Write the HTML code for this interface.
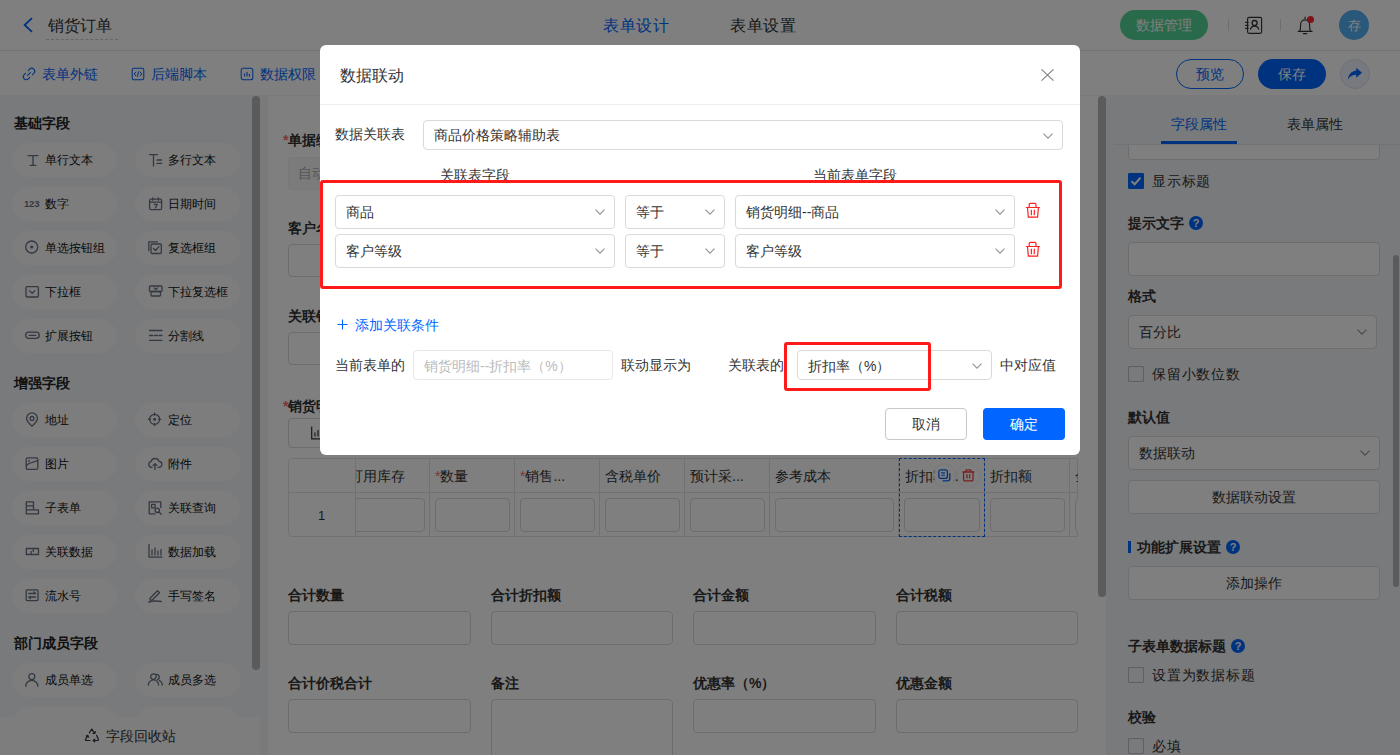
<!DOCTYPE html>
<html><head><meta charset="utf-8">
<style>
*{box-sizing:border-box;margin:0;padding:0}
html,body{width:1400px;height:755px;overflow:hidden;background:#fff}
body{position:relative;font-family:"Liberation Sans",sans-serif;font-size:14px;color:#333}
.a{position:absolute}
.t{position:absolute;white-space:nowrap;line-height:1}
svg{position:absolute;overflow:visible}
#hdr{left:0;top:0;width:1400px;height:51px;border-bottom:1px solid #e6e6e6;background:#fff}
#tb{left:0;top:51px;width:1400px;height:45px;background:#fff;border-bottom:1px solid #f4f4f4}
#lp{left:0;top:96px;width:268px;height:659px;background:#f3f4f6}
.pill{position:absolute;width:105px;height:34px;border-radius:17px;background:#fafbfc}
.pill span{position:absolute;left:33px;top:10px;font-size:12px;line-height:14px;color:#111;white-space:nowrap}
.pill svg{left:14px;top:11px}
.sec{position:absolute;left:14px;font-size:14px;font-weight:bold;color:#222;line-height:14px;white-space:nowrap}
#rp{left:1106px;top:96px;width:294px;height:659px;background:#f3f5f9}
.inp{position:absolute;border:1px solid #dadada;border-radius:4px;background:#fff}
.lbl{position:absolute;font-size:14px;font-weight:bold;color:#333;white-space:nowrap;line-height:14px}
.sb{position:absolute;width:8px;border-radius:4px;background:#b6b6b6}
#mask{left:0;top:0;width:1400px;height:755px;background:rgba(0,0,0,.5)}
#modal{left:320px;top:45px;width:760px;height:410px;background:#fff;border-radius:6px}
.sel{position:absolute;border:1px solid #dadada;border-radius:4px;background:#fff}
.sel span{position:absolute;left:10px;font-size:14px;line-height:14px;color:#333;white-space:nowrap}
.chev{position:absolute;width:7px;height:7px;border-right:1.3px solid #888;border-bottom:1.3px solid #888;transform:rotate(45deg)}
.th{position:absolute;top:459px;height:34px;border-right:1px solid #ebeef5}
.td{position:absolute;top:493px;height:43px;border-right:1px solid #ebeef5;border-top:1px solid #ebeef5}
.tht{position:absolute;top:469px;font-size:14px;line-height:14px;color:#333;white-space:nowrap}
.star{color:#f56c6c}
.cb{position:absolute;width:16px;height:16px;border:1px solid #b9bec8;border-radius:1px;background:transparent}
.q{position:absolute;width:14px;height:14px;border-radius:50%;background:#0066ff;color:#fff;font-size:11px;line-height:14px;text-align:center;font-weight:bold}
.btn{position:absolute;border:1px solid #dcdfe6;border-radius:4px;background:#fff;text-align:center;font-size:14px;color:#333}
</style></head>
<body>
<!-- ============ HEADER ============ -->
<div id="hdr" class="a">
  <svg style="left:22px;top:17px" width="12" height="16" viewBox="0 0 12 16"><path d="M10 1.2 L2.6 8 L10 14.8" fill="none" stroke="#0066ff" stroke-width="1.8"/></svg>
  <div class="t" style="left:48px;top:18px;font-size:16px;color:#333">销货订单</div>
  <div class="a" style="left:46px;top:39px;width:72px;border-top:1px dashed #ccc"></div>
  <div class="t" style="left:603px;top:18px;font-size:16px;letter-spacing:.7px;color:#0066ff">表单设计</div>
  <div class="t" style="left:730px;top:18px;font-size:16px;letter-spacing:.7px;color:#333">表单设置</div>
  <div class="a" style="left:1120px;top:10px;width:88px;height:30px;border-radius:15px;background:#52d494"></div>
  <div class="t" style="left:1136px;top:18px;font-size:14px;color:#fff">数据管理</div>
  <div class="a" style="left:1228px;top:19px;width:1px;height:12px;background:#ddd"></div>
  <div class="a" style="left:1280px;top:19px;width:1px;height:12px;background:#ddd"></div>
  <svg style="left:1244px;top:16px" width="20" height="19" viewBox="0 0 20 19"><rect x="3.6" y="1.3" width="14" height="16" rx="1.5" fill="none" stroke="#333" stroke-width="1.15"/><path d="M1.2 6.3H4.6M1.2 9.3H4.6M1.2 12.3H4.6" stroke="#333" stroke-width="1.2"/><circle cx="10.6" cy="7" r="2.5" fill="none" stroke="#333" stroke-width="1.3"/><path d="M6.4 13.6A4.3 4.3 0 0 1 14.8 13.6" fill="none" stroke="#333" stroke-width="1.3"/></svg>
  <svg style="left:1297px;top:15px" width="18" height="20" viewBox="0 0 18 20"><path d="M8.1 2V3.8M2.8 16.3C3.4 14.6 3.6 13 3.6 9.4A4.5 4.5 0 0 1 12.6 9.4C12.6 13 12.8 14.6 13.4 16.3M1.2 16.4H15M6.4 18.6H9.8" fill="none" stroke="#333" stroke-width="1.15" stroke-linecap="round"/></svg>
  <div class="a" style="left:1307px;top:16px;width:7px;height:7px;border-radius:50%;background:#f23"></div>
  <div class="a" style="left:1339px;top:10px;width:30px;height:30px;border-radius:50%;background:#52b0f5"></div>
  <div class="t" style="left:1348px;top:19px;font-size:13px;color:#fff">存</div>
</div>
<!-- ============ TOOLBAR ============ -->
<div id="tb" class="a">
    <svg style="left:22px;top:16px" width="14" height="14" viewBox="0 0 14 14"><path d="M5.6 8.4L8.4 5.6M6.2 3.6L7.6 2.2A2.6 2.6 0 0 1 11.8 6.4L10.4 7.8M7.8 10.4L6.4 11.8A2.6 2.6 0 0 1 2.2 7.6L3.6 6.2" fill="none" stroke="#0066ff" stroke-width="1.05" stroke-linecap="round"/></svg>
  <svg style="left:131px;top:16px" width="14" height="14" viewBox="0 0 14 14"><rect x="1.2" y="1.2" width="11.6" height="11.6" rx="1.5" fill="none" stroke="#0066ff" stroke-width="1.05"/><path d="M5 4.8L3.2 7L5 9.2M9 4.8L10.8 7L9 9.2M7.8 4.2L6.2 9.8" fill="none" stroke="#0066ff" stroke-width="1"/></svg>
  <svg style="left:240px;top:16px" width="14" height="14" viewBox="0 0 14 14"><rect x="1.2" y="1.2" width="11.6" height="11.6" rx="2" fill="none" stroke="#0066ff" stroke-width="1.05"/><path d="M4.6 6.5V9.6M7 5V9.6M9.4 7V9.6" fill="none" stroke="#0066ff" stroke-width="1.1"/></svg>
  <div class="t" style="left:42px;top:16px;font-size:14px;color:#0066ff">表单外链</div>
  <div class="t" style="left:151px;top:16px;font-size:14px;color:#0066ff">后端脚本</div>
  <div class="t" style="left:260px;top:16px;font-size:14px;color:#0066ff">数据权限</div>
  <div class="a" style="left:1176px;top:8px;width:68px;height:30px;border-radius:15px;border:1px solid #0066ff;background:#fff"></div>
  <div class="t" style="left:1196px;top:16px;font-size:14px;color:#0066ff">预览</div>
  <div class="a" style="left:1258px;top:8px;width:68px;height:30px;border-radius:15px;background:#0066ff"></div>
  <div class="t" style="left:1278px;top:16px;font-size:14px;color:#fff">保存</div>
  <div class="a" style="left:1340px;top:8px;width:30px;height:30px;border-radius:50%;border:1px solid #d8e2f5;background:#eef3fc"></div>
  <svg style="left:1347px;top:16px" width="16" height="14" viewBox="0 0 16 14"><path d="M9.2 0.8L15 5.8L9.2 10.8V7.8C5.5 7.8 3 9.2 1 12.6C1.4 8 3.6 4.4 9.2 3.8Z" fill="#0066ff"/></svg>
</div>

<!-- ============ LEFT PANEL ============ -->
<div id="lp" class="a"></div>
<div class="sec" style="top:116px">基础字段</div>
<div class="pill" style="left:12px;top:143px"><svg style="left:13px;top:10px" width="16" height="16" viewBox="0 0 16 16"><path d="M3 2.6H13M8 2.6V12.4M5.2 12.4H10.8" fill="none" stroke="#687082" stroke-width="1.3" stroke-linecap="round" stroke-linejoin="round" stroke-width="1.5"/></svg><span>单行文本</span></div>
<div class="pill" style="left:135px;top:143px"><svg style="left:13px;top:10px" width="16" height="16" viewBox="0 0 16 16"><path d="M1.6 1.6H9.5M5.5 1.6V13M9 7H13.6M9 10.4H13.6" fill="none" stroke="#687082" stroke-width="1.3" stroke-linecap="round" stroke-linejoin="round" stroke-width="1.4"/></svg><span>多行文本</span></div>
<div class="pill" style="left:12px;top:187px"><div class="t" style="left:12px;top:12px;font-size:9.5px;font-weight:bold;letter-spacing:-.2px;color:#687082">123</div><span>数字</span></div>
<div class="pill" style="left:135px;top:187px"><svg style="left:13px;top:10px" width="16" height="16" viewBox="0 0 16 16"><rect x="1.6" y="2.2" width="12" height="10.5" rx="1.5" fill="none" stroke="#687082" stroke-width="1.3" stroke-linecap="round" stroke-linejoin="round"/><path d="M1.6 5.2H13.6M4.8 0.8V3.2M10.4 0.8V3.2M6.3 7.4H9.2L7.4 11" fill="none" stroke="#687082" stroke-width="1.3" stroke-linecap="round" stroke-linejoin="round" stroke-width="1.1"/></svg><span>日期时间</span></div>
<div class="pill" style="left:12px;top:231px"><svg style="left:13px;top:10px" width="16" height="16" viewBox="0 0 16 16"><circle cx="6.7" cy="6" r="6" fill="none" stroke="#687082" stroke-width="1.3" stroke-linecap="round" stroke-linejoin="round"/><circle cx="6.7" cy="6" r="1.6" fill="#687082"/></svg><span>单选按钮组</span></div>
<div class="pill" style="left:135px;top:231px"><svg style="left:13px;top:10px" width="16" height="16" viewBox="0 0 16 16"><path d="M0.8 9.5V0.8H9.5" fill="none" stroke="#687082" stroke-width="1.3" stroke-linecap="round" stroke-linejoin="round"/><rect x="3" y="3" width="10.3" height="9.5" rx="1" fill="none" stroke="#687082" stroke-width="1.3" stroke-linecap="round" stroke-linejoin="round"/><path d="M5.5 7.5L7.5 9.5L11 5.6" fill="none" stroke="#687082" stroke-width="1.3" stroke-linecap="round" stroke-linejoin="round"/></svg><span>复选框组</span></div>
<div class="pill" style="left:12px;top:275px"><svg style="left:13px;top:10px" width="16" height="16" viewBox="0 0 16 16"><rect x="1" y="1.6" width="12.4" height="10.4" rx="1" fill="none" stroke="#687082" stroke-width="1.3" stroke-linecap="round" stroke-linejoin="round"/><path d="M4.5 5.6L7.2 8.2L9.9 5.6" fill="none" stroke="#687082" stroke-width="1.3" stroke-linecap="round" stroke-linejoin="round"/></svg><span>下拉框</span></div>
<div class="pill" style="left:135px;top:275px"><svg style="left:13px;top:10px" width="16" height="16" viewBox="0 0 16 16"><rect x="1.5" y="1" width="12.5" height="5.5" rx="1" fill="none" stroke="#687082" stroke-width="1.3" stroke-linecap="round" stroke-linejoin="round"/><rect x="3" y="6.5" width="9.5" height="4.5" rx="0.8" fill="none" stroke="#687082" stroke-width="1.3" stroke-linecap="round" stroke-linejoin="round"/><path d="M6.3 3L7.8 4.4L9.3 3" fill="none" stroke="#687082" stroke-width="1.3" stroke-linecap="round" stroke-linejoin="round"/></svg><span>下拉复选框</span></div>
<div class="pill" style="left:12px;top:319px"><svg style="left:13px;top:10px" width="16" height="16" viewBox="0 0 16 16"><rect x="0.6" y="3.2" width="13.6" height="6.2" rx="3.1" fill="none" stroke="#687082" stroke-width="1.3" stroke-linecap="round" stroke-linejoin="round"/><path d="M4 6.3H10.8" fill="none" stroke="#687082" stroke-width="1.3" stroke-linecap="round" stroke-linejoin="round"/></svg><span>扩展按钮</span></div>
<div class="pill" style="left:135px;top:319px"><svg style="left:13px;top:10px" width="16" height="16" viewBox="0 0 16 16"><path d="M1.5 1.5H14M1.5 6.5H4.5M6.3 6.5H9.3M11 6.5H14M1.5 11.3H14" fill="none" stroke="#687082" stroke-width="1.3" stroke-linecap="round" stroke-linejoin="round"/></svg><span>分割线</span></div>
<div class="sec" style="top:376px">增强字段</div>
<div class="pill" style="left:12px;top:403px"><svg style="left:13px;top:10px" width="16" height="16" viewBox="0 0 16 16"><path d="M7 13.2C7 13.2 1.6 8.6 1.6 5.3A5.4 5.4 0 0 1 12.4 5.3C12.4 8.6 7 13.2 7 13.2Z" fill="none" stroke="#687082" stroke-width="1.3" stroke-linecap="round" stroke-linejoin="round"/><circle cx="7" cy="5.4" r="1.9" fill="none" stroke="#687082" stroke-width="1.3" stroke-linecap="round" stroke-linejoin="round"/></svg><span>地址</span></div>
<div class="pill" style="left:135px;top:403px"><svg style="left:13px;top:10px" width="16" height="16" viewBox="0 0 16 16"><circle cx="6.6" cy="6.3" r="5" fill="none" stroke="#687082" stroke-width="1.3" stroke-linecap="round" stroke-linejoin="round"/><circle cx="6.6" cy="6.3" r="1.5" fill="#687082"/><path d="M6.6 0V2.2M6.6 10.4V12.6M0.3 6.3H2.5M10.7 6.3H12.9" fill="none" stroke="#687082" stroke-width="1.3" stroke-linecap="round" stroke-linejoin="round"/></svg><span>定位</span></div>
<div class="pill" style="left:12px;top:447px"><svg style="left:13px;top:10px" width="16" height="16" viewBox="0 0 16 16"><rect x="1.2" y="0.8" width="11.6" height="11.6" rx="1.5" fill="none" stroke="#687082" stroke-width="1.3" stroke-linecap="round" stroke-linejoin="round"/><path d="M1.4 8.5L4 6.5L12.6 3.6" fill="none" stroke="#687082" stroke-width="1.3" stroke-linecap="round" stroke-linejoin="round"/><circle cx="4" cy="4" r="0.9" fill="#687082"/></svg><span>图片</span></div>
<div class="pill" style="left:135px;top:447px"><svg style="left:13px;top:10px" width="16" height="16" viewBox="0 0 16 16"><path d="M4 10.3H3.4A2.9 2.9 0 0 1 3 4.6A4.2 4.2 0 0 1 11 4.3A3 3 0 0 1 10.8 10.3H10" fill="none" stroke="#687082" stroke-width="1.3" stroke-linecap="round" stroke-linejoin="round"/><path d="M7 12.5V6.8M5 8.6L7 6.6L9 8.6" fill="none" stroke="#687082" stroke-width="1.3" stroke-linecap="round" stroke-linejoin="round"/></svg><span>附件</span></div>
<div class="pill" style="left:12px;top:491px"><svg style="left:13px;top:10px" width="16" height="16" viewBox="0 0 16 16"><path d="M8.5 8.8V0.8H1.3V12.8H8.5M1.3 4.8H8.5M1.3 8.8H13.5V12.8H8.5" fill="none" stroke="#687082" stroke-width="1.3" stroke-linecap="round" stroke-linejoin="round"/></svg><span>子表单</span></div>
<div class="pill" style="left:135px;top:491px"><svg style="left:13px;top:10px" width="16" height="16" viewBox="0 0 16 16"><path d="M7 12.8H1.2V0.8H12.8V6.5" fill="none" stroke="#687082" stroke-width="1.3" stroke-linecap="round" stroke-linejoin="round"/><rect x="3.6" y="3.4" width="3.4" height="3.4" fill="none" stroke="#687082" stroke-width="1.3" stroke-linecap="round" stroke-linejoin="round"/><circle cx="9.3" cy="9.3" r="2.2" fill="none" stroke="#687082" stroke-width="1.3" stroke-linecap="round" stroke-linejoin="round"/><path d="M11 11L13.2 13.2" fill="none" stroke="#687082" stroke-width="1.3" stroke-linecap="round" stroke-linejoin="round"/></svg><span>关联查询</span></div>
<div class="pill" style="left:12px;top:535px"><svg style="left:13px;top:10px" width="16" height="16" viewBox="0 0 16 16"><path d="M5.2 9.5H1.3V3.5H8.3V6.5M9 3.5H13.5V9.5H6.2V6.5" fill="none" stroke="#687082" stroke-width="1.3" stroke-linecap="round" stroke-linejoin="round"/></svg><span>关联数据</span></div>
<div class="pill" style="left:135px;top:535px"><svg style="left:13px;top:10px" width="16" height="16" viewBox="0 0 16 16"><path d="M1 -0.5V12.2H14M4 5V10M7 3V10M10 6V10M13 4.5V10" fill="none" stroke="#687082" stroke-width="1.3" stroke-linecap="round" stroke-linejoin="round"/></svg><span>数据加载</span></div>
<div class="pill" style="left:12px;top:579px"><svg style="left:13px;top:10px" width="16" height="16" viewBox="0 0 16 16"><rect x="1.2" y="0.8" width="11.8" height="10.8" rx="1" fill="none" stroke="#687082" stroke-width="1.3" stroke-linecap="round" stroke-linejoin="round"/><path d="M3.8 4.5H10.5L9 3M10.5 8H3.8L5.3 9.5" fill="none" stroke="#687082" stroke-width="1.3" stroke-linecap="round" stroke-linejoin="round"/></svg><span>流水号</span></div>
<div class="pill" style="left:135px;top:579px"><svg style="left:13px;top:10px" width="16" height="16" viewBox="0 0 16 16"><path d="M2 9.2L9.5 1.7L11.5 3.7L4 11.2H2Z" fill="none" stroke="#687082" stroke-width="1.3" stroke-linecap="round" stroke-linejoin="round"/><path d="M0.8 13.2Q5 11.2 13.2 12.5" fill="none" stroke="#687082" stroke-width="1.3" stroke-linecap="round" stroke-linejoin="round"/></svg><span>手写签名</span></div>
<div class="sec" style="top:636px">部门成员字段</div>
<div class="pill" style="left:12px;top:663px"><svg style="left:13px;top:10px" width="16" height="16" viewBox="0 0 16 16"><circle cx="6.8" cy="3.6" r="3" fill="none" stroke="#687082" stroke-width="1.3" stroke-linecap="round" stroke-linejoin="round"/><path d="M0.8 13.3A6 6 0 0 1 12.8 13.3" fill="none" stroke="#687082" stroke-width="1.3" stroke-linecap="round" stroke-linejoin="round"/></svg><span>成员单选</span></div>
<div class="pill" style="left:135px;top:663px"><svg style="left:13px;top:10px" width="16" height="16" viewBox="0 0 16 16"><circle cx="5.5" cy="3.6" r="2.8" fill="none" stroke="#687082" stroke-width="1.3" stroke-linecap="round" stroke-linejoin="round"/><path d="M0.4 12A5.1 5.1 0 0 1 10.6 12M8.6 1.3A2.8 2.8 0 0 1 9.5 6.7M11.2 7.5A5 5 0 0 1 14.3 12" fill="none" stroke="#687082" stroke-width="1.3" stroke-linecap="round" stroke-linejoin="round"/></svg><span>成员多选</span></div>
<div class="pill" style="left:12px;top:707px"><span>部门单选</span></div>
<div class="pill" style="left:135px;top:707px"><span>部门多选</span></div>
<div class="sb" style="left:252px;top:96px;height:574px"></div>
<div class="a" style="left:0;top:717px;width:260px;height:38px;background:#fafafa"></div>
<svg style="left:84px;top:728px" width="16" height="15" viewBox="0 0 16 15"><path d="M7.8 1.2L5.3 4.8M7.8 1.2L10.6 5.4M9 5.5H10.9L11.3 3.6M12.6 7.4L14.3 11.1Q14.6 12.5 13.2 12.5H9.3M10.7 11.1L9.2 12.5L10.7 13.9M6 12.5H2.4Q1.1 12.5 1.6 11.2L3.8 7.6M2.2 8.1L3.9 7.4L4.5 9.1" fill="none" stroke="#333" stroke-width="1.2" stroke-linejoin="round" stroke-linecap="round"/></svg>
<div class="t" style="left:106px;top:729px;font-size:14px;color:#333">字段回收站</div>

<!-- ============ CENTER CANVAS ============ -->
<div class="lbl" style="left:283px;top:133px"><span class="star">*</span>单据编号</div>
<div class="inp" style="left:288px;top:157px;width:400px;height:33px;background:#f7f7f7;border-color:#f0f0f0"></div>
<div class="t" style="left:298px;top:166px;font-size:14px;color:#aaa">自动生成</div>
<div class="lbl" style="left:288px;top:221px">客户名称</div>
<div class="inp" style="left:288px;top:244px;width:400px;height:33px"></div>
<div class="lbl" style="left:288px;top:309px">关联销售单</div>
<div class="inp" style="left:288px;top:332px;width:400px;height:33px"></div>
<div class="lbl" style="left:283px;top:399px"><span class="star">*</span>销货明细</div>
<div class="inp" style="left:288px;top:418px;width:90px;height:30px"></div>
<svg style="left:311px;top:426px" width="14" height="14" viewBox="0 0 14 14"><path d="M0.7 0.5V12.8H13M4 6.5V10.5M7 4V10.5M10 7V10.5" fill="none" stroke="#333" stroke-width="1.2"/></svg>

<!-- table -->
<div class="a" style="left:288px;top:458px;width:790px;height:79px;border:1px solid #e3e3e3;border-radius:4px 0 0 4px"></div>
<div class="a" style="left:355px;top:492px;width:723px;height:1px;background:#e3e3e3"></div>
<div class="a" style="left:288px;top:492px;width:67px;height:1px;background:#e3e3e3"></div>
<div class="t" style="left:318px;top:509px;font-size:13px;color:#333">1</div>
<div class="a" style="left:356px;top:459px;width:722px;height:77px;overflow:hidden">
<div class="a" style="left:-12px;top:0;width:86px;height:77px;border-right:1px solid #e3e3e3"></div>
<div class="t" style="left:-7px;top:10px;font-size:14px;color:#333">可用库存</div>
<div class="inp" style="left:-7px;top:39px;width:76px;height:34px"></div>
<div class="a" style="left:74px;top:0;width:85px;height:77px;border-right:1px solid #e3e3e3"></div>
<div class="t" style="left:79px;top:10px;font-size:14px;color:#333"><span class="star">*</span>数量</div>
<div class="inp" style="left:79px;top:39px;width:75px;height:34px"></div>
<div class="a" style="left:159px;top:0;width:85px;height:77px;border-right:1px solid #e3e3e3"></div>
<div class="t" style="left:164px;top:10px;font-size:14px;color:#333"><span class="star">*</span>销售...</div>
<div class="inp" style="left:164px;top:39px;width:75px;height:34px"></div>
<div class="a" style="left:244px;top:0;width:85px;height:77px;border-right:1px solid #e3e3e3"></div>
<div class="t" style="left:249px;top:10px;font-size:14px;color:#333">含税单价</div>
<div class="inp" style="left:249px;top:39px;width:75px;height:34px"></div>
<div class="a" style="left:329px;top:0;width:85px;height:77px;border-right:1px solid #e3e3e3"></div>
<div class="t" style="left:334px;top:10px;font-size:14px;color:#333">预计采...</div>
<div class="inp" style="left:334px;top:39px;width:75px;height:34px"></div>
<div class="a" style="left:414px;top:0;width:129px;height:77px;border-right:1px solid #e3e3e3"></div>
<div class="t" style="left:419px;top:10px;font-size:14px;color:#333">参考成本</div>
<div class="inp" style="left:419px;top:39px;width:119px;height:34px"></div>
<div class="a" style="left:543px;top:0;width:86px;height:77px;border-right:1px solid #e3e3e3"></div>
<div class="t" style="left:549px;top:10px;font-size:14px;color:#333">折扣率...</div>
<div class="inp" style="left:548px;top:39px;width:76px;height:34px"></div>
<div class="a" style="left:629px;top:0;width:85px;height:77px;border-right:1px solid #e3e3e3"></div>
<div class="t" style="left:634px;top:10px;font-size:14px;color:#333">折扣额</div>
<div class="inp" style="left:634px;top:39px;width:75px;height:34px"></div>
<div class="a" style="left:714px;top:0;width:90px;height:77px;border-right:1px solid #e3e3e3"></div>
<div class="t" style="left:719px;top:10px;font-size:14px;color:#333">金额</div>
<div class="inp" style="left:719px;top:39px;width:80px;height:34px"></div>
</div>
<div class="a" style="left:355px;top:458px;width:1px;height:79px;background:#e3e3e3"></div>

<div class="a" style="left:899px;top:458px;width:86px;height:79px;border:1px dashed #0066ff"></div>
<div class="a" style="left:934px;top:465px;width:21px;height:21px;border-radius:50%;background:#fff;box-shadow:0 0 4px rgba(0,0,0,.1)"></div>
<svg style="left:938px;top:469px" width="13" height="13" viewBox="0 0 13 13"><rect x="0.8" y="0.8" width="8.6" height="8.6" rx="2" fill="none" stroke="#0066ff" stroke-width="1.3"/><path d="M11.8 4.2V9.8A2 2 0 0 1 9.8 11.8H4.6" fill="none" stroke="#0066ff" stroke-width="1.3"/><path d="M3.3 3.9H6.9M3.3 6.3H6.9" stroke="#0066ff" stroke-width="1.1"/></svg>
<div class="a" style="left:958px;top:465px;width:21px;height:21px;border-radius:50%;background:#fff;box-shadow:0 0 4px rgba(0,0,0,.1)"></div>
<svg style="left:962px;top:469px" width="13" height="13" viewBox="0 0 13 13"><path d="M0.4 3H12.3M3.8 3V1.6A0.8 0.8 0 0 1 4.6 0.8H8.1A0.8 0.8 0 0 1 8.9 1.6V3M1.6 3V10.9A0.9 0.9 0 0 0 2.5 11.8H10.1A0.9 0.9 0 0 0 11 10.9V3M5 5.2V9.4M7.6 5.2V9.4" fill="none" stroke="#f04040" stroke-width="1.3"/></svg>
<div class="sb" style="left:1098px;top:96px;height:501px"></div>

<!-- summary fields -->
<div class="lbl" style="left:288px;top:588px">合计数量</div>
<div class="lbl" style="left:491px;top:588px">合计折扣额</div>
<div class="lbl" style="left:693px;top:588px">合计金额</div>
<div class="lbl" style="left:896px;top:588px">合计税额</div>
<div class="inp" style="left:288px;top:611px;width:183px;height:34px"></div>
<div class="inp" style="left:491px;top:611px;width:182px;height:34px"></div>
<div class="inp" style="left:693px;top:611px;width:183px;height:34px"></div>
<div class="inp" style="left:896px;top:611px;width:182px;height:34px"></div>
<div class="lbl" style="left:288px;top:676px">合计价税合计</div>
<div class="lbl" style="left:491px;top:676px">备注</div>
<div class="lbl" style="left:693px;top:676px">优惠率（%）</div>
<div class="lbl" style="left:896px;top:676px">优惠金额</div>
<div class="inp" style="left:288px;top:699px;width:183px;height:34px"></div>
<div class="inp" style="left:491px;top:699px;width:182px;height:80px"></div>
<div class="inp" style="left:693px;top:699px;width:183px;height:34px"></div>
<div class="inp" style="left:896px;top:699px;width:182px;height:34px"></div>

<!-- ============ RIGHT PANEL ============ -->
<div id="rp" class="a"></div>
<div class="inp" style="left:1128px;top:120px;width:252px;height:40px"></div>
<div class="a" style="left:1106px;top:96px;width:294px;height:48px;background:#f3f5f9"></div>
<div class="a" style="left:1114px;top:144px;width:286px;height:1px;background:#e4e7ed"></div>
<div class="t" style="left:1171px;top:117px;font-size:14px;color:#0066ff">字段属性</div>
<div class="t" style="left:1287px;top:117px;font-size:14px;color:#333">表单属性</div>
<div class="a" style="left:1161px;top:141px;width:76px;height:3px;background:#0066ff"></div>

<div class="cb" style="left:1128px;top:173px;background:#0066ff;border-color:#0066ff"></div>
<svg style="left:1128px;top:173px" width="16" height="16" viewBox="0 0 16 16"><path d="M3.5 8.2L6.6 11.2L12.5 4.8" fill="none" stroke="#fff" stroke-width="2"/></svg>
<div class="t" style="left:1152px;top:174px;font-size:14px;letter-spacing:.8px;color:#333">显示标题</div>
<div class="lbl" style="left:1128px;top:216px">提示文字</div>
<div class="q" style="left:1189px;top:216px">?</div>
<div class="inp" style="left:1128px;top:242px;width:252px;height:34px"></div>
<div class="lbl" style="left:1128px;top:289px">格式</div>
<div class="sel" style="left:1128px;top:315px;width:249px;height:34px"><span style="top:9px">百分比</span><svg style="left:228px;top:13px" width="10" height="6" viewBox="0 0 10 6"><path d="M0.5 0.6L5 5.2L9.5 0.6" fill="none" stroke="#909399" stroke-width="1.1"/></svg></div>
<div class="cb" style="left:1128px;top:366px"></div>
<div class="t" style="left:1152px;top:367px;font-size:14px;letter-spacing:.8px;color:#333">保留小数位数</div>
<div class="lbl" style="left:1128px;top:410px">默认值</div>
<div class="sel" style="left:1128px;top:436px;width:252px;height:34px"><span style="top:9px">数据联动</span><svg style="left:231px;top:13px" width="10" height="6" viewBox="0 0 10 6"><path d="M0.5 0.6L5 5.2L9.5 0.6" fill="none" stroke="#909399" stroke-width="1.1"/></svg></div>
<div class="btn" style="left:1128px;top:480px;width:252px;height:34px;line-height:32px">数据联动设置</div>
<div class="a" style="left:1128px;top:541px;width:3px;height:12px;background:#0066ff"></div>
<div class="lbl" style="left:1137px;top:540px">功能扩展设置</div>
<div class="q" style="left:1226px;top:540px">?</div>
<div class="btn" style="left:1128px;top:566px;width:252px;height:34px;line-height:32px">添加操作</div>
<div class="lbl" style="left:1128px;top:639px">子表单数据标题</div>
<div class="q" style="left:1231px;top:639px">?</div>
<div class="cb" style="left:1128px;top:667px"></div>
<div class="t" style="left:1152px;top:668px;font-size:14px;letter-spacing:.8px;color:#333">设置为数据标题</div>
<div class="lbl" style="left:1128px;top:710px">校验</div>
<div class="cb" style="left:1128px;top:738px"></div>
<div class="t" style="left:1152px;top:739px;font-size:14px;letter-spacing:.8px;color:#333">必填</div>
<div class="sb" style="left:1393px;top:255px;height:332px;width:6px;border-radius:3px"></div>

<div id="mask" class="a"></div>

<!-- ============ MODAL ============ -->
<div id="modal" class="a">
  <div class="t" style="left:20px;top:23px;font-size:16px;color:#333">数据联动</div>
  <svg style="left:721px;top:24px" width="13" height="12" viewBox="0 0 13 12"><path d="M0.5 0.3L12.5 11.7M12.5 0.3L0.5 11.7" stroke="#808080" stroke-width="1.1"/></svg>
  <div class="a" style="left:0;top:59px;width:760px;height:1px;background:#eee"></div>
  <div class="t" style="left:15px;top:82px;font-size:14px;color:#333">数据关联表</div>
  <div class="sel" style="left:103px;top:75px;width:640px;height:30px"><span style="top:7px">商品价格策略辅助表</span><svg style="left:619px;top:11.5px" width="10" height="6" viewBox="0 0 10 6"><path d="M0.5 0.6L5 5.2L9.5 0.6" fill="none" stroke="#909399" stroke-width="1.1"/></svg></div>
  <div class="t" style="left:120px;top:123px;font-size:14px;color:#333">关联表字段</div>
  <div class="t" style="left:493px;top:123px;font-size:14px;color:#333">当前表单字段</div>
  <div class="a" style="left:0;top:135px;width:742px;height:109px;border:3px solid #ff1a1a;border-radius:3px;background:#fff"></div>
  <div class="sel" style="left:15px;top:150px;width:280px;height:34px"><span style="top:9px">商品</span><svg style="left:259px;top:13px" width="10" height="6" viewBox="0 0 10 6"><path d="M0.5 0.6L5 5.2L9.5 0.6" fill="none" stroke="#909399" stroke-width="1.1"/></svg></div>
  <div class="sel" style="left:305px;top:150px;width:100px;height:34px"><span style="top:9px">等于</span><svg style="left:79px;top:13px" width="10" height="6" viewBox="0 0 10 6"><path d="M0.5 0.6L5 5.2L9.5 0.6" fill="none" stroke="#909399" stroke-width="1.1"/></svg></div>
  <div class="sel" style="left:415px;top:150px;width:280px;height:34px"><span style="top:9px">销货明细--商品</span><svg style="left:259px;top:13px" width="10" height="6" viewBox="0 0 10 6"><path d="M0.5 0.6L5 5.2L9.5 0.6" fill="none" stroke="#909399" stroke-width="1.1"/></svg></div>
  <div class="sel" style="left:15px;top:189px;width:280px;height:34px"><span style="top:9px">客户等级</span><svg style="left:259px;top:13px" width="10" height="6" viewBox="0 0 10 6"><path d="M0.5 0.6L5 5.2L9.5 0.6" fill="none" stroke="#909399" stroke-width="1.1"/></svg></div>
  <div class="sel" style="left:305px;top:189px;width:100px;height:34px"><span style="top:9px">等于</span><svg style="left:79px;top:13px" width="10" height="6" viewBox="0 0 10 6"><path d="M0.5 0.6L5 5.2L9.5 0.6" fill="none" stroke="#909399" stroke-width="1.1"/></svg></div>
  <div class="sel" style="left:415px;top:189px;width:280px;height:34px"><span style="top:9px">客户等级</span><svg style="left:259px;top:13px" width="10" height="6" viewBox="0 0 10 6"><path d="M0.5 0.6L5 5.2L9.5 0.6" fill="none" stroke="#909399" stroke-width="1.1"/></svg></div>
  <svg style="left:705px;top:158px" width="16" height="16" viewBox="0 0 16 16"><path d="M0.8 4.5H14.9M4.2 4.5V1.5A1.2 1.2 0 0 1 5.4 0.3H9.8A1.2 1.2 0 0 1 11 1.5V4.5M2.5 4.5L3.3 14.2H12.6L13.4 4.5M6.3 6.8L6.5 12.2M9.4 6.8L9.2 12.2" fill="none" stroke="#ff2020" stroke-width="1.2" stroke-linejoin="round"/></svg>
  <svg style="left:705px;top:197px" width="16" height="16" viewBox="0 0 16 16"><path d="M0.8 4.5H14.9M4.2 4.5V1.5A1.2 1.2 0 0 1 5.4 0.3H9.8A1.2 1.2 0 0 1 11 1.5V4.5M2.5 4.5L3.3 14.2H12.6L13.4 4.5M6.3 6.8L6.5 12.2M9.4 6.8L9.2 12.2" fill="none" stroke="#ff2020" stroke-width="1.2" stroke-linejoin="round"/></svg>
  <svg style="left:17px;top:274px" width="11" height="11" viewBox="0 0 11 11"><path d="M5.5 0.5V10.5M0.5 5.5H10.5" stroke="#0066ff" stroke-width="1.1"/></svg>
  <div class="t" style="left:35px;top:273px;font-size:14px;color:#0066ff">添加关联条件</div>
  <div class="t" style="left:15px;top:313px;font-size:14px;color:#333">当前表单的</div>
  <div class="sel" style="left:93px;top:305px;width:200px;height:30px;border-color:#e8e8e8"><span style="top:8px;color:#bbb">销货明细--折扣率（%）</span></div>
  <div class="t" style="left:301px;top:313px;font-size:14px;color:#333">联动显示为</div>
  <div class="t" style="left:408px;top:313px;font-size:14px;color:#333">关联表的</div>
  <div class="sel" style="left:477px;top:305px;width:195px;height:30px"><span style="top:8px">折扣率（%）</span><svg style="left:174px;top:11.5px" width="10" height="6" viewBox="0 0 10 6"><path d="M0.5 0.6L5 5.2L9.5 0.6" fill="none" stroke="#909399" stroke-width="1.1"/></svg></div>
  <div class="a" style="left:464px;top:297px;width:147px;height:49px;border:3px solid #ff1a1a;border-radius:3px"></div>
  <div class="t" style="left:680px;top:313px;font-size:14px;color:#333">中对应值</div>
  <div class="btn" style="left:565px;top:363px;width:82px;height:32px;line-height:30px;border-color:#c8c8c8">取消</div>
  <div class="btn" style="left:663px;top:363px;width:82px;height:32px;line-height:32px;background:#0066ff;border:none;color:#fff;font-weight:500">确定</div>
</div>
</body></html>
